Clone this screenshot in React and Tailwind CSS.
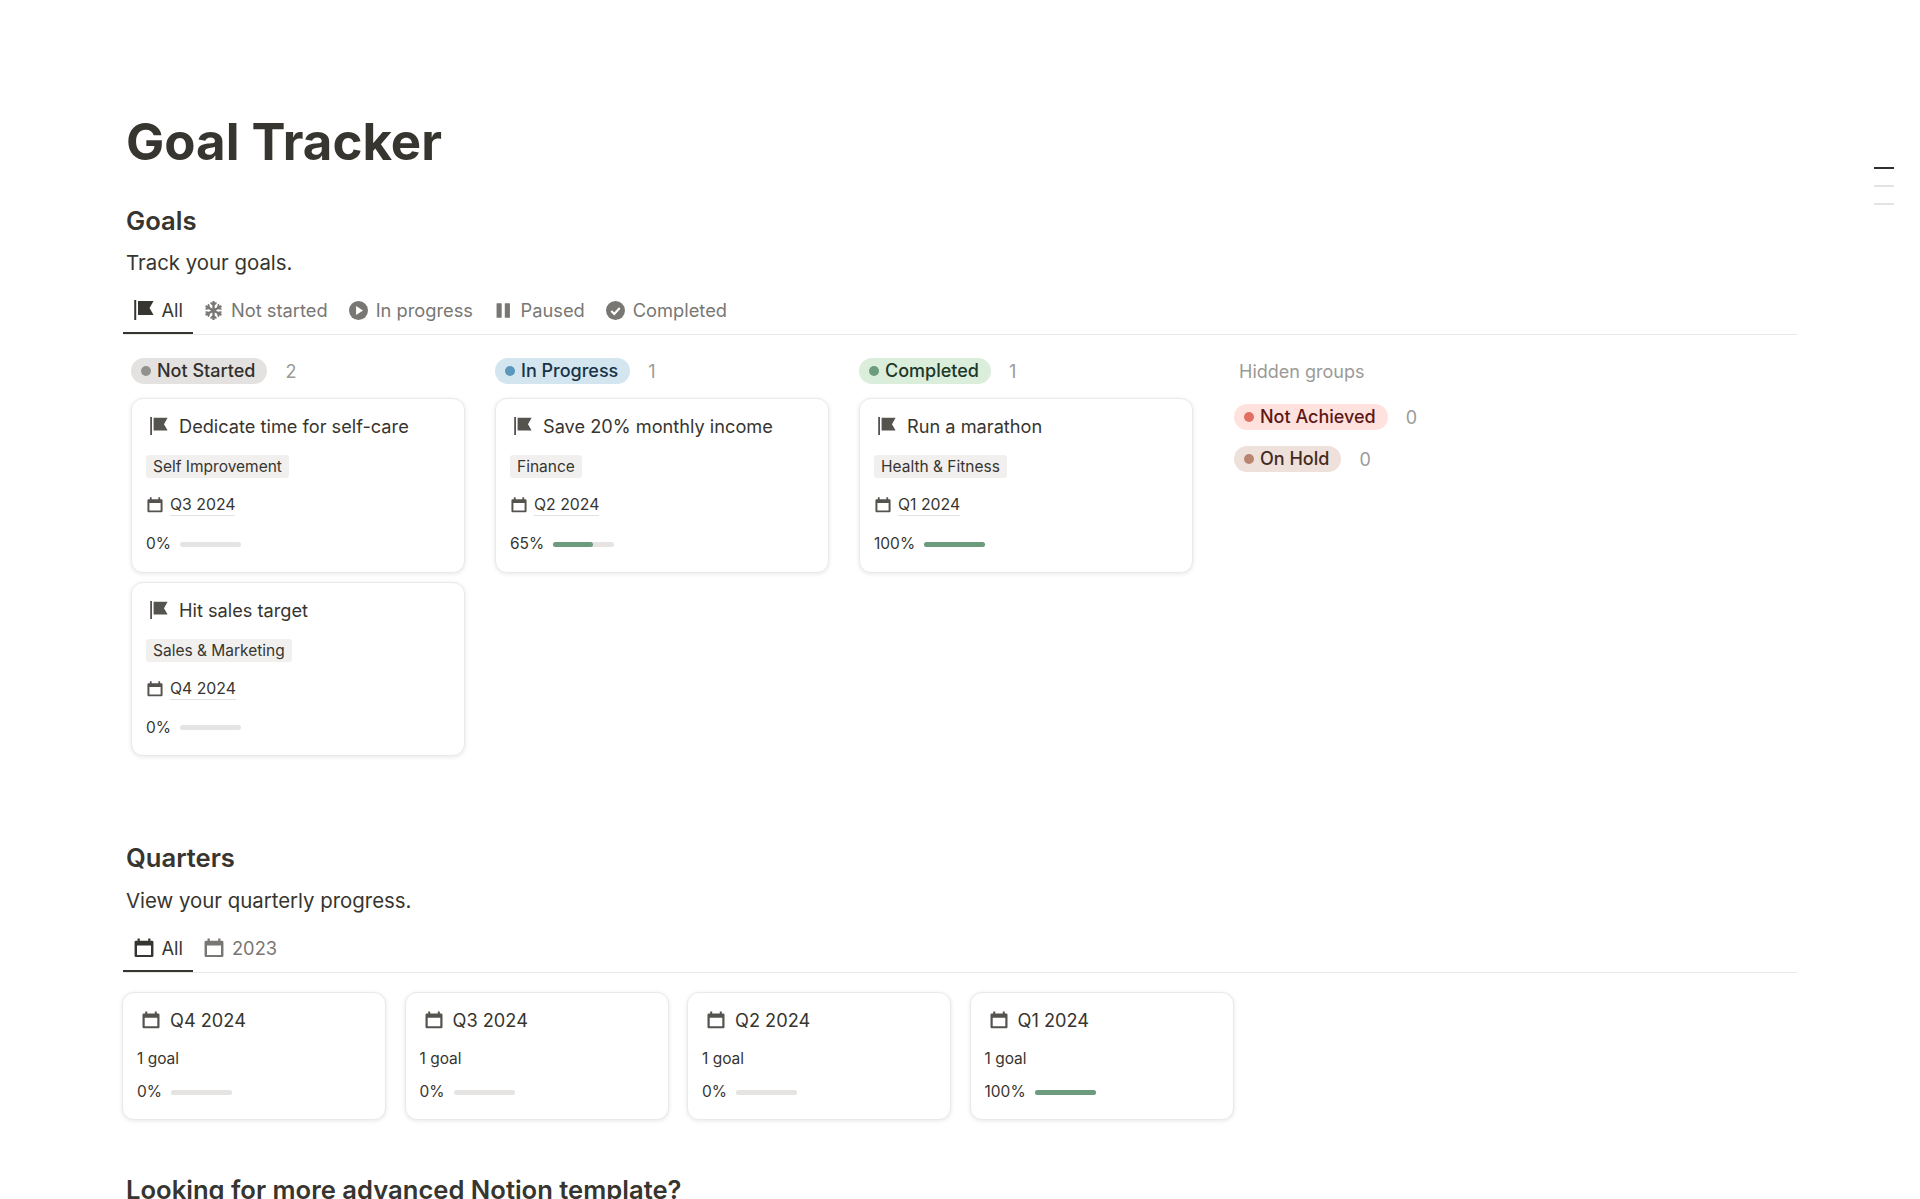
import { FaSnowflake } from "react-icons/fa";

const goals = [
  {
    label: "Not Started",
    count: 2,
    pill: "bg-[#e3e2e0] text-[#32302c]",
    dot: "bg-[#91918e]",
    cards: [
      { title: "Dedicate time for self-care", tag: "Self Improvement", quarter: "Q3 2024", pct: 0 },
      { title: "Hit sales target", tag: "Sales & Marketing", quarter: "Q4 2024", pct: 0 },
    ],
  },
  {
    label: "In Progress",
    count: 1,
    pill: "bg-[#d3e5ef] text-[#183347]",
    dot: "bg-[#5b97bd]",
    cards: [{ title: "Save 20% monthly income", tag: "Finance", quarter: "Q2 2024", pct: 65 }],
  },
  {
    label: "Completed",
    count: 1,
    pill: "bg-[#dbeddb] text-[#1c3829]",
    dot: "bg-[#6c9b7d]",
    cards: [{ title: "Run a marathon", tag: "Health & Fitness", quarter: "Q1 2024", pct: 100 }],
  },
];

const quarters = [
  { title: "Q4 2024", pct: 0 },
  { title: "Q3 2024", pct: 0 },
  { title: "Q2 2024", pct: 0 },
  { title: "Q1 2024", pct: 100 },
];

function FlagIcon({ className }) {
  return (
    <svg viewBox="0 0 18 18" fill="currentColor" className={className}>
      <rect x="0.2" y="0" width="1.8" height="18" />
      <path d="M3.6 0.8h14l-3.6 6.4 3.6 6.4H3.6z" />
    </svg>
  );
}

function CalendarIcon({ className }) {
  return (
    <svg viewBox="0 0 18 18" fill="currentColor" className={className}>
      <path
        fillRule="evenodd"
        d="M3.2 0.4h2v2h7.6v-2h2v2h1.4a1.3 1.3 0 0 1 1.3 1.3v12.2a1.3 1.3 0 0 1-1.3 1.3H1.8A1.3 1.3 0 0 1 .5 15.9V3.7a1.3 1.3 0 0 1 1.3-1.3h1.4zM2.7 6.8v8.5h12.6V6.8z"
      />
    </svg>
  );
}

function PlayIcon({ className }) {
  return (
    <svg viewBox="0 0 18 18" className={className}>
      <circle cx="9" cy="9" r="9" fill="currentColor" />
      <path d="M6.7 4.8v8.4l6.6-4.2z" fill="#fff" />
    </svg>
  );
}

function PauseIcon({ className }) {
  return (
    <svg viewBox="0 0 18 18" fill="currentColor" className={className}>
      <rect x="2.5" y="2" width="5" height="14" rx="0.5" />
      <rect x="10.5" y="2" width="5" height="14" rx="0.5" />
    </svg>
  );
}

function CheckIcon({ className }) {
  return (
    <svg viewBox="0 0 18 18" className={className}>
      <circle cx="9" cy="9" r="9" fill="currentColor" />
      <path d="M5 9.4l2.8 2.8L13 6.6" fill="none" stroke="#fff" strokeWidth="2" />
    </svg>
  );
}

function Progress({ pct }) {
  return (
    <div className="flex items-center gap-[9px] text-[15.5px] leading-5 text-[#37352f]">
      <span>{pct}%</span>
      <div className="h-[5px] w-[61px] rounded-full bg-[#e5e4e2]">
        <div className="h-full rounded-full bg-[#6c9b7d]" style={{ width: `${pct}%` }} />
      </div>
    </div>
  );
}

function Tab({ icon, label, active }) {
  return (
    <div
      className={`flex h-[43px] items-center gap-[8px] border-b-2 px-[10.5px] pb-[3px] ${
        active ? "border-[#37352f] text-[#37352f]" : "border-transparent text-[#787774]"
      }`}
    >
      {icon}
      <span className="text-[18.3px] leading-6">{label}</span>
    </div>
  );
}

function Pill({ label, pill, dot, count }) {
  return (
    <div className="flex h-[26px] items-center">
      <div className={`flex h-full items-center gap-[6px] rounded-full pl-[10px] pr-[12px] text-[18px] leading-6 font-medium ${pill}`}>
        <span className={`h-[10px] w-[10px] rounded-full ${dot}`} />
        {label}
      </div>
      <span className="ml-[18px] text-[18px] text-[#9b9a97]">{count}</span>
    </div>
  );
}

function GoalCard({ title, tag, quarter, pct }) {
  return (
    <div className="h-[174.5px] w-[334px] rounded-[12px] border border-[#e9e9e7] bg-white pl-[14px] pt-[15px] shadow-[0_1px_4px_rgba(15,15,15,0.1)]">
      <div className="flex items-center gap-[11px] pl-[4px]">
        <FlagIcon className="h-[18px] w-[18px] text-[#55534e]" />
        <span className="text-[18.2px] leading-6 text-[#37352f]">{title}</span>
      </div>
      <div className="mt-[17px] w-fit rounded-[3px] bg-[#f1f0ef] px-[7px] text-[15.5px] leading-[23px] text-[#37352f]">{tag}</div>
      <div className="mt-[16px] flex items-center gap-[7px] pl-[1px]">
        <CalendarIcon className="h-[16px] w-[16px] text-[#55534e]" />
        <span className="border-b border-[#e3e2e0] text-[15.8px] leading-[21px] text-[#37352f]">{quarter}</span>
      </div>
      <div className="mt-[18px]">
        <Progress pct={pct} />
      </div>
    </div>
  );
}

function QuarterCard({ title, pct }) {
  return (
    <div className="h-[128px] w-[264px] rounded-[12px] border border-[#e9e9e7] bg-white pl-[14px] pt-[15px] shadow-[0_1px_4px_rgba(15,15,15,0.1)]">
      <div className="flex items-center gap-[10px] pl-[5px]">
        <CalendarIcon className="h-[18px] w-[18px] text-[#55534e]" />
        <span className="text-[18.2px] leading-6 text-[#37352f]">{title}</span>
      </div>
      <div className="mt-[17px] text-[15.5px] leading-5 text-[#37352f]">1 goal</div>
      <div className="mt-[13px]">
        <Progress pct={pct} />
      </div>
    </div>
  );
}

export default function App() {
  return (
    <div className="relative h-[1199px] overflow-hidden bg-white pl-[123px] pr-[123px] pt-[113px] font-['Inter','Noto_Sans',sans-serif] text-[#37352f]">
      <h1 className="pl-[3px] text-[51px] leading-[58px] font-bold">Goal Tracker</h1>

      <h2 className="mt-[35px] pl-[3px] text-[25.6px] leading-[30px] font-semibold">Goals</h2>
      <p className="mt-[13px] pl-[3px] text-[20.4px] leading-7">Track your goals.</p>

      <div className="mt-[14px] flex border-b border-[#e9e9e7]">
        <Tab active label="All" icon={<FlagIcon className="h-[20px] w-[20px]" />} />
        <Tab label="Not started" icon={<FaSnowflake className="h-[19px] w-[19px]" />} />
        <Tab label="In progress" icon={<PlayIcon className="h-[19px] w-[19px]" />} />
        <Tab label="Paused" icon={<PauseIcon className="h-[19px] w-[18.5px]" />} />
        <Tab label="Completed" icon={<CheckIcon className="h-[19px] w-[19px]" />} />
      </div>

      <div className="mt-[23px] flex gap-[30px] pl-[8px]">
        {goals.map((col) => (
          <div key={col.label} className="flex w-[334px] flex-col gap-[9px]">
            <div className="mb-[5px]">
              <Pill {...col} />
            </div>
            {col.cards.map((card) => (
              <GoalCard key={card.title} {...card} />
            ))}
          </div>
        ))}
        <div className="flex flex-col pl-[11px]">
          <div className="flex h-[26px] items-center pl-[5px] text-[18px] text-[#9b9a97]">Hidden groups</div>
          <div className="mt-[20px] flex flex-col gap-[16px]">
            <Pill label="Not Achieved" count={0} pill="bg-[#ffe2dd] text-[#5d1715]" dot="bg-[#e16f64]" />
            <Pill label="On Hold" count={0} pill="bg-[#eee0da] text-[#442a1e]" dot="bg-[#ba856f]" />
          </div>
        </div>
      </div>

      <h2 className="mt-[87px] pl-[3px] text-[25.6px] leading-[30px] font-semibold">Quarters</h2>
      <p className="mt-[14px] pl-[3px] text-[20.4px] leading-7">View your quarterly progress.</p>

      <div className="mt-[14px] flex border-b border-[#e9e9e7]">
        <Tab active label="All" icon={<CalendarIcon className="h-[20px] w-[20px]" />} />
        <Tab label="2023" icon={<CalendarIcon className="h-[20px] w-[20px]" />} />
      </div>

      <div className="-ml-px mt-[19px] flex gap-[18.5px]">
        {quarters.map((q) => (
          <QuarterCard key={q.title} {...q} />
        ))}
      </div>

      <h2 className="mt-[55px] pl-[3px] text-[25.6px] leading-[30px] font-semibold">Looking for more advanced Notion template?</h2>

      <div className="absolute right-[26px] top-[167px] flex w-[20px] flex-col gap-[16px]">
        <div className="h-[2px] bg-[#2f2f2f]" />
        <div className="h-[2px] bg-[#e3e3e3]" />
        <div className="h-[2px] bg-[#e3e3e3]" />
      </div>
    </div>
  );
}
